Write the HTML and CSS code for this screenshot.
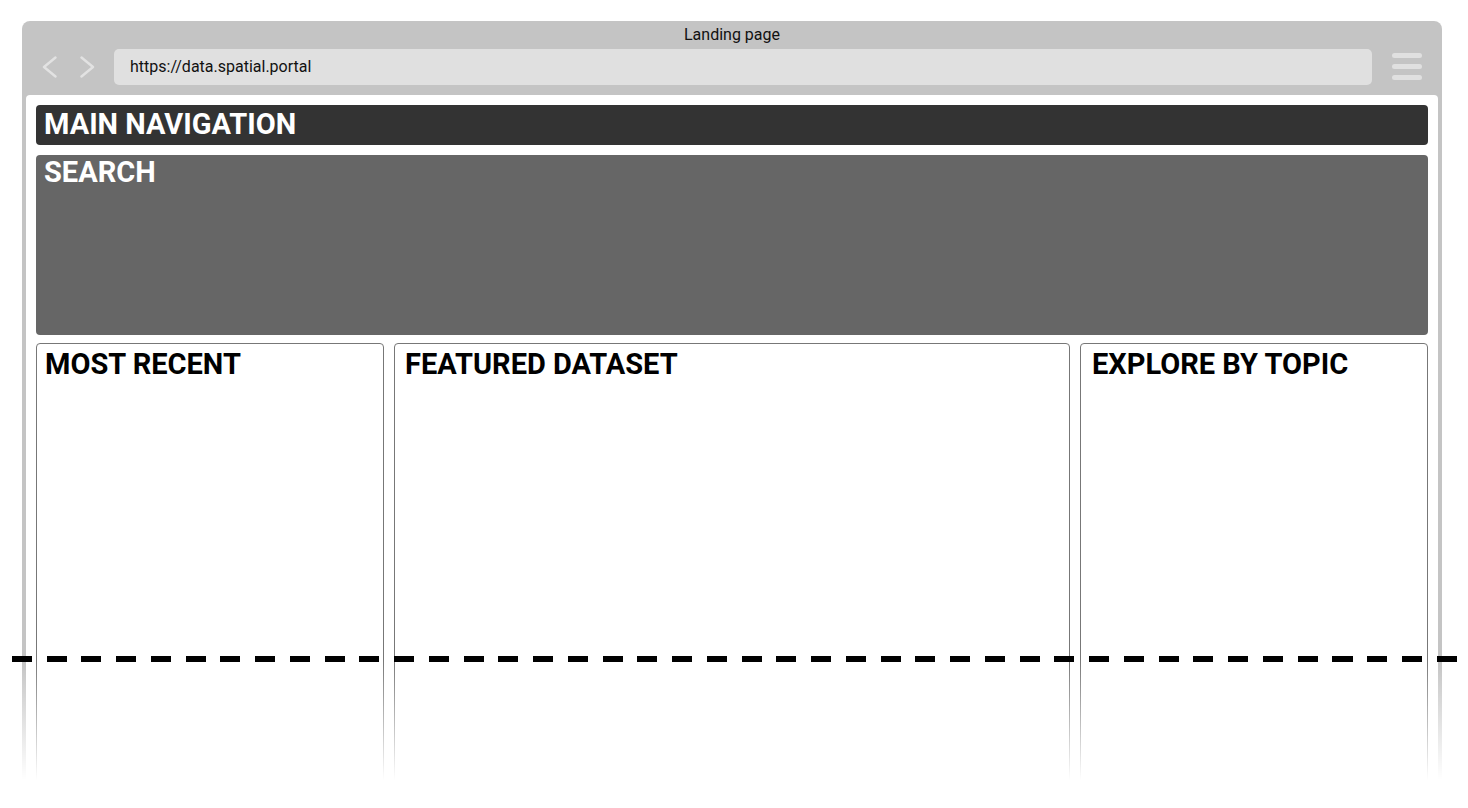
FILE: index.html
```html
<!DOCTYPE html>
<html lang="en">
<head>
    <meta charset="UTF-8">
    <meta name="viewport" content="width=device-width, initial-scale=1.0">
    <title>Landing page</title>
    <link rel="stylesheet" href="styles.css">
</head>
<body>

    <div class="page">
        <div class="browser">
            <div class="browser-top">
                <div class="tab-title">Landing page</div>
                <div class="toolbar">
                    <div class="nav-arrows">
                        <svg width="16" height="22" viewBox="0 0 16 22">
                            <polyline points="13.5,1.5 2,11 13.5,20.5" />
                        </svg>
                        <svg width="16" height="22" viewBox="0 0 16 22">
                            <polyline points="2.5,1.5 14,11 2.5,20.5" />
                        </svg>
                    </div>
                    <div class="address">https://data.spatial.portal</div>
                    <div class="menu">
                        <span></span>
                        <span></span>
                        <span></span>
                    </div>
                </div>
            </div>

            <div class="viewport">
                <div class="main-nav">MAIN NAVIGATION</div>
                <div class="search">SEARCH</div>
                <div class="columns">
                    <div class="panel">MOST RECENT</div>
                    <div class="panel panel-featured">FEATURED DATASET</div>
                    <div class="panel panel-topic">EXPLORE BY TOPIC</div>
                </div>
            </div>
        </div>

        <!-- fade the bottom of the wireframe out -->
        <div class="fade"></div>
        <!-- the fold -->
        <div class="fold"></div>
    </div>

</body>
</html>
```

FILE: styles.css
```css
* {
    margin: 0;
    padding: 0;
    box-sizing: border-box;
    font-family: Roboto, "Liberation Sans", sans-serif;
}

body {
    width: 1468px;
    height: 808px;
    overflow: hidden;
    background-color: white;
}

.page {
    position: relative;
    height: 808px;
    padding: 21px 0 0 22px;
}

.browser {
    width: 1420px;
    height: 787px;
    background-color: #c4c4c4;
    border-radius: 8px 8px 0 0;
    padding: 0 4px;
    display: flex;
    flex-direction: column;
}

.browser-top {
    height: 74px;
}

.tab-title {
    height: 26px;
    line-height: 27px;
    text-align: center;
    font-size: 16px;
    color: #111;
}

.toolbar {
    display: flex;
    align-items: center;
    margin-top: 2px;
    height: 36px;
}

.nav-arrows {
    display: flex;
    align-items: center;
    gap: 21px;
    width: 88px;
    padding-left: 16px;
}

.nav-arrows svg {
    display: block;
    margin-top: -1px;
}

.nav-arrows polyline {
    fill: none;
    stroke: #e2e2e2;
    stroke-width: 2.4;
    stroke-linecap: round;
    stroke-linejoin: round;
}

.address {
    flex: 1;
    height: 36px;
    line-height: 36px;
    background-color: #e0e0e0;
    border-radius: 5px;
    padding-left: 16px;
    font-size: 16px;
    color: #111;
}

.menu {
    width: 66px;
    padding-left: 20px;
    display: flex;
    flex-direction: column;
    gap: 6px;
    margin-top: -2px;
}

.menu span {
    display: block;
    width: 30px;
    height: 5px;
    border-radius: 3px;
    background-color: #e0e0e0;
}

.viewport {
    flex: 1;
    background-color: white;
    border-radius: 4px 4px 0 0;
    padding: 10px;
    display: flex;
    flex-direction: column;
}

.main-nav {
    height: 40px;
    line-height: 39px;
    background-color: #333;
    color: white;
    border-radius: 4px;
    padding: 0 8px;
    font-size: 29px;
    font-weight: bold;
}

.search {
    height: 180px;
    margin-top: 10px;
    line-height: 35px;
    background-color: #666;
    color: white;
    border-radius: 4px;
    padding: 0 8px;
    font-size: 29px;
    font-weight: bold;
}

.columns {
    flex: 1;
    margin-top: 8px;
    display: grid;
    grid-template-columns: 348px 1fr 348px;
    gap: 10px;
}

.panel {
    border: 1px solid #777;
    border-radius: 4px;
    padding: 2px 8px;
    line-height: 37px;
    font-size: 29px;
    font-weight: bold;
    color: black;
}

.panel-featured {
    padding-left: 10px;
}

.panel-topic {
    padding-left: 11px;
}

.fade {
    position: absolute;
    left: 0;
    right: 0;
    top: 660px;
    height: 148px;
    background: linear-gradient(to bottom, rgba(255, 255, 255, 0) 0, white 120px);
}

.fold {
    position: absolute;
    left: 12px;
    top: 656px;
    width: 1445px;
    height: 6px;
    background: repeating-linear-gradient(to right, black 0, black 20px, transparent 20px, transparent 34.75px);
}
```
